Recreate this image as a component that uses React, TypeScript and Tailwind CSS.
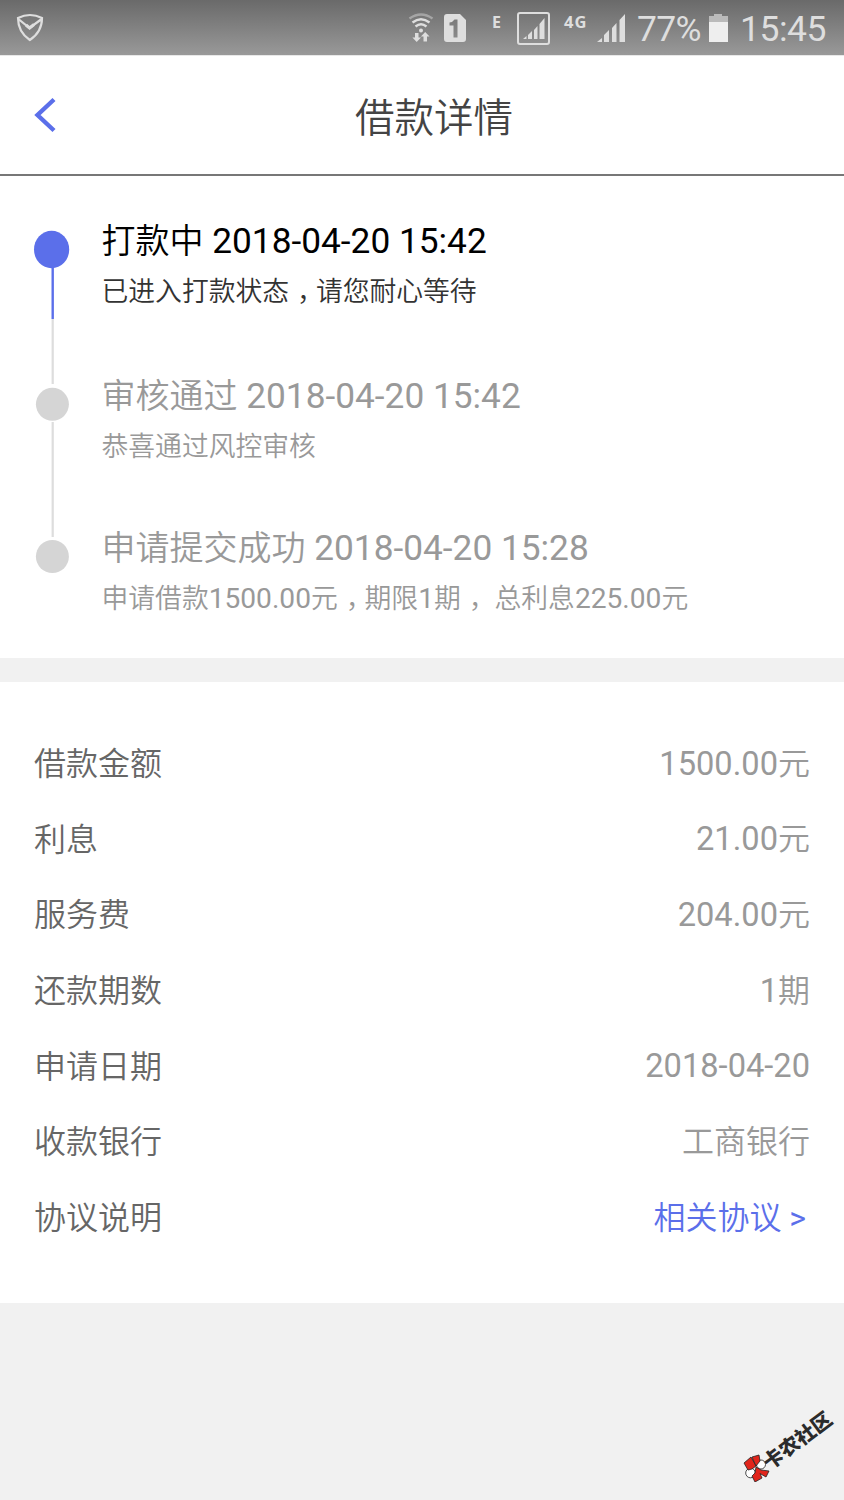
import { Fragment } from "react";

type Step = { title: string; time: string; note: string };

const steps: Step[] = [
  { title: "打款中", time: "2018-04-20 15:42", note: "已进入打款状态，请您耐心等待" },
  { title: "审核通过", time: "2018-04-20 15:42", note: "恭喜通过风控审核" },
  { title: "申请提交成功", time: "2018-04-20 15:28", note: "申请借款1500.00元，期限1期， 总利息225.00元" },
];

const rows = [
  { label: "借款金额", value: "1500.00元" },
  { label: "利息", value: "21.00元" },
  { label: "服务费", value: "204.00元" },
  { label: "还款期数", value: "1期" },
  { label: "申请日期", value: "2018-04-20" },
  { label: "收款银行", value: "工商银行" },
];

// Latin runs are set a touch larger than the Chinese around them
function Mixed({ text, latin = "text-[1.035em]" }: { text: string; latin?: string }) {
  return (
    <>
      {text.split(/([0-9.:\- ]+|，)/).map((part, i) => {
        if (part === "，") {
          return <span key={i} className="ml-[0.3em] mr-[0.2em] [font-feature-settings:'halt']">{part}</span>;
        }
        if (/^[0-9.:\- ]+$/.test(part)) return <span key={i} className={`font-normal ${latin}`}>{part}</span>;
        return <Fragment key={i}>{part}</Fragment>;
      })}
    </>
  );
}

function StatusBar() {
  return (
    <div className="h-14 shrink-0 flex items-center bg-linear-to-b from-[#6a6a6a] to-[#999999] border-b border-[#e8e8e8] text-[#dedede] font-normal">
      <svg className="ml-4 mt-px w-[28px] h-[30px]" viewBox="0 0 28 30" fill="none" stroke="currentColor" strokeWidth="2.2">
        <path d="M2 5Q14 -1 26 5Q26 19 13.800 27Q2 19 2 5ZM3 6.500L13.500 15L25 6.500" />
        <path d="M10 12L13.600 15L18 11.500" strokeWidth="3" />
      </svg>
      <svg className="ml-[364px] w-[224px] h-[56px]" viewBox="408 0 224 56" fill="currentColor">
        <g fill="none" stroke="currentColor" strokeWidth="2.400">
          <path d="M409.500 18.500Q421 10.500 432.500 18.500" opacity="0.45" />
          <path d="M412.500 22.500Q421 16 429.500 22.500" />
          <path d="M415.500 26.500Q421 22 426.500 26.500" />
        </g>
        <circle cx="421" cy="30.500" r="2" />
        <path d="M415 33h3.500v4.500h2.500l-4.300 4.500l-4.300-4.500h2.600zM423.500 41.500h3.500v-5h2.500l-4.300-4.500l-4.300 4.500h2.600z" />
        <path fillRule="evenodd" d="M447 14h13l6 6v19q0 3-3 3h-16q-3 0-3-3v-22q0-3 3-3zM449.500 22.500v3h4v12h4v-18h-3q-1.500 2.500-5 3z" />
        <rect x="518" y="13" width="31" height="31" rx="2" fill="none" stroke="currentColor" strokeWidth="2" />
        <path d="M523 39l3.500-3v3zM528 35l4-4v8h-4zM534 30l3.500-4v13h-3.500zM539.500 24l5-6v21h-5z" />
        <path d="M597 42l5-4v4zM604 35l5-5v12h-5zM612 28l4.500-5v19h-4.500zM619.500 20l5.500-6v28h-5.500z" />
        <text x="492" y="28" fontSize="16" fontWeight="700" fontFamily="Open Sans, sans-serif">E</text>
        <text x="564" y="28" fontSize="16.500" fontWeight="700" letterSpacing="1" fontFamily="Open Sans, sans-serif">4G</text>
      </svg>
      <span className="ml-[5px] mt-[5px] w-[66px] text-[35.5px] leading-none tracking-[-0.7px]">77%</span>
      <svg className="ml-[6px] w-[19px] h-[28px]" viewBox="0 0 19 28">
        <path d="M0 2h5V0h8v2h6v6H0z" fill="#bababa" />
        <path d="M0 8h19v20H0z" fill="#eeeeee" />
      </svg>
      <span className="ml-3 mt-[5px] text-[35.5px] leading-none tracking-[-0.5px]">15:45</span>
    </div>
  );
}

function Timeline() {
  return (
    <section className="relative h-[482px] shrink-0 bg-white pl-[101.5px] pt-[38px]">
      <svg className="absolute left-0 top-0 w-[90px] h-[440px]" viewBox="0 176 90 440">
        <path d="M52.700 319V384M52.700 422V537" stroke="#dddddd" strokeWidth="2.200" />
        <path d="M52.700 260V319" stroke="#5b6fea" strokeWidth="2.400" />
        <ellipse cx="51.600" cy="249.500" rx="17.600" ry="18.700" fill="#5b6fea" />
        <circle cx="52.400" cy="404.300" r="16.500" fill="#d5d5d5" />
        <circle cx="52.400" cy="556.500" r="16.500" fill="#d5d5d5" />
      </svg>
      {steps.map((step, i) => (
        <div key={step.title} className={i === 0 ? "h-[155px] text-black" : "h-[152px] text-[#999999]"}>
          <div className="h-[55px] leading-[55px] text-[34px] whitespace-pre">
            <Mixed text={`${step.title} ${step.time}`} latin="text-[1.037em]" />
          </div>
          <div className={`h-[45px] leading-[46px] text-[26.8px] whitespace-pre ${i === 0 ? "text-[#333333]" : ""}`}>
            <Mixed text={step.note} latin="text-[1.05em]" />
          </div>
        </div>
      ))}
    </section>
  );
}

function Watermark() {
  return (
    <div className="absolute left-[743px] top-[1454px] flex items-center">
      <svg className="w-[28px] h-[28px]" viewBox="0 0 28 28" stroke="#222222" strokeWidth="0.8">
        <circle cx="18" cy="10.500" r="4.500" fill="#ffffff" />
        <circle cx="7.500" cy="19" r="4.800" fill="#ffffff" />
        <path d="M1 9L8 3L13 12L9 15L5 16Z" fill="#e1251b" />
        <path d="M9 3L16 1L17 7L13 12Z" fill="#e1251b" />
        <path d="M13 13L18 16L26 17L23 23L17 19.500L19 24L12 28L9 22L12 19Z" fill="#e1251b" />
      </svg>
      <span className="absolute left-[22px] top-0 origin-left rotate-[-37deg] font-['Noto_Sans_CJK_SC',sans-serif] text-[20px] leading-5 font-black text-[#2b2b2b] whitespace-nowrap">
        卡农社区
      </span>
    </div>
  );
}

export default function App() {
  return (
    <div className="relative w-[844px] h-[1500px] overflow-hidden flex flex-col bg-[#f1f1f1] font-[Roboto,'Noto_Sans_CJK_SC_DemiLight','Noto_Sans_CJK_SC',sans-serif] font-[350]">
      <StatusBar />
      <header className="h-[120px] shrink-0 flex items-center bg-white border-b-2 border-[#777777]">
        <svg className="ml-[34px] w-[24px] h-[36px]" viewBox="0 0 24 36" fill="none" stroke="#5b6fea" strokeWidth="4.4">
          <path d="M20 2.500L3.500 18L20 33.500" />
        </svg>
        <h1 className="ml-[297px] mt-[7px] text-[39.5px] leading-[60px] text-[#444444]">借款详情</h1>
      </header>
      <Timeline />
      <section className="mt-6 h-[621px] shrink-0 bg-white px-[34px] pt-[44.5px] text-[32px]">
        {rows.map((row) => (
          <div key={row.label} className="h-[75.6px] flex items-center justify-between">
            <span className="text-[#666666]">{row.label}</span>
            <span className="text-[#999999]">
              <Mixed text={row.value} latin="text-[1.02em]" />
            </span>
          </div>
        ))}
        <div className="h-[75.6px] flex items-center justify-between">
          <span className="text-[#666666]">协议说明</span>
          <a className="mr-[4px] text-[#5b6fea]">
            相关协议 <span className="font-normal">&gt;</span>
          </a>
        </div>
      </section>
      <Watermark />
    </div>
  );
}
